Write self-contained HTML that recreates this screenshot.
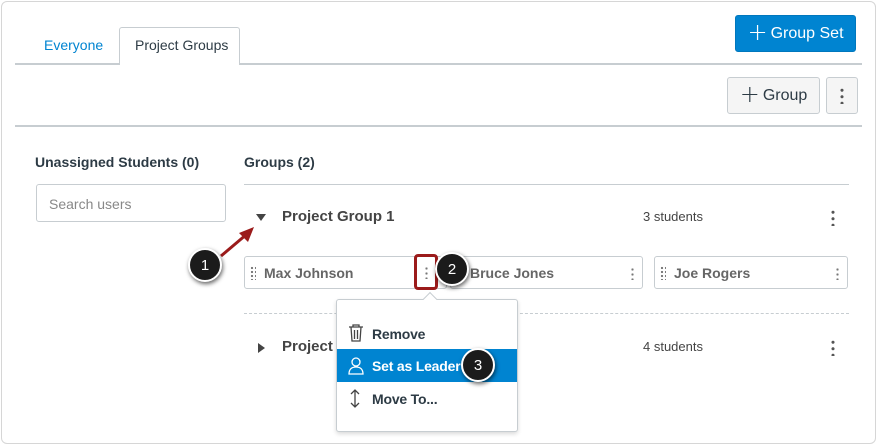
<!DOCTYPE html>
<html><head><meta charset="utf-8"><style>
*{box-sizing:border-box;margin:0;padding:0}
body{width:877px;height:445px;background:#fff;font-family:"Liberation Sans",sans-serif;position:relative;overflow:hidden;color:#2d3b45}
.a{position:absolute}
.frame{left:1px;top:1px;width:875px;height:443px;border:1px solid #d6d6d6;border-radius:6px}
.hl{height:2px;background:#c7cdd1}
.btn{border:1px solid #c7cdd1;background:#f5f5f5;border-radius:3px;color:#2d3b45;font-size:16px;display:flex;align-items:center;justify-content:center}
.card{top:256px;height:33px;border:1px solid #c7cdd1;border-radius:3px}
.nm{font-size:14px;font-weight:bold;color:#666;top:8px;left:19px}
.grip{left:5px;top:9px;width:6px;height:14px;background-image:radial-gradient(circle,#777 1px,transparent 1.3px);background-size:4px 4px}
.kb{width:3px;height:13px;background-image:radial-gradient(circle,#777 1px,transparent 1.3px);background-size:3px 5px}
.kbb{width:4px;height:17px;background-image:radial-gradient(circle,#555 1.4px,transparent 1.7px);background-size:4px 6.5px}
.call{width:34px;height:34px;border-radius:50%;background:#1b1b1b;border:2px solid #fff;box-shadow:1px 2px 4px rgba(0,0,0,.6);color:#fff;font-size:15px;display:flex;align-items:center;justify-content:center}
.mi{left:0;width:180px;height:33px;font-size:14px;font-weight:bold;display:flex;align-items:center;padding-left:35px;letter-spacing:-0.2px}
.pl{font-size:24px;font-weight:100;margin-right:3px;margin-top:-3px;font-family:"DejaVu Sans",sans-serif}
</style></head><body>
<div class="a frame"></div>
<div class="a" style="left:44px;top:37px;font-size:14px;color:#0084d1">Everyone</div>
<div class="a" style="left:119px;top:27px;width:121px;height:38px;border:1px solid #c7cdd1;border-bottom:none;background:#fff;border-radius:3px 3px 0 0;font-size:14px;padding:9px 0 0 15px;z-index:2">Project Groups</div>
<div class="a hl" style="left:15px;top:63px;width:847px"></div>
<div class="a btn" style="left:735px;top:15px;width:121px;height:37px;background:#0084d1;border-color:#0077bd;color:#fff"><span class="pl">+</span>Group Set</div>
<div class="a btn" style="left:727px;top:77px;width:93px;height:37px"><span class="pl">+</span>Group</div>
<div class="a btn" style="left:826px;top:77px;width:32px;height:37px"><div class="kbb"></div></div>
<div class="a hl" style="left:15px;top:125px;width:847px"></div>
<div class="a" style="left:35px;top:154px;font-size:14px;font-weight:bold">Unassigned Students (0)</div>
<div class="a" style="left:36px;top:184px;width:190px;height:38px;border:1px solid #c7cdd1;border-radius:3px;font-size:14px;color:#888;padding:11px 0 0 12px">Search users</div>
<div class="a" style="left:244px;top:154px;font-size:14px;font-weight:bold">Groups (2)</div>
<div class="a" style="left:244px;top:184px;width:605px;height:1px;background:#c7cdd1"></div>
<div class="a" style="left:256px;top:214px;width:0;height:0;border-left:5px solid transparent;border-right:5px solid transparent;border-top:7px solid #444"></div>
<div class="a" style="left:282px;top:208px;font-size:15px;font-weight:bold;color:#444">Project Group 1</div>
<div class="a" style="left:643px;top:209px;font-size:13px;color:#444">3 students</div>
<div class="a kbb" style="left:831px;top:209px"></div>
<div class="a card" style="left:244px;width:203px"><div class="a grip"></div><div class="a nm">Max Johnson</div></div>
<div class="a kb" style="left:425px;top:266px"></div>
<div class="a card" style="left:450px;width:193px"><div class="a nm">Bruce Jones</div><div class="a kb" style="left:180px;top:10px"></div></div>
<div class="a card" style="left:654px;width:194px"><div class="a grip"></div><div class="a nm">Joe Rogers</div><div class="a kb" style="left:181px;top:10px"></div></div>
<div class="a" style="left:414px;top:254px;width:24px;height:36px;border:3px solid #9b1b1b;border-radius:4px"></div>
<div class="a" style="left:244px;top:313px;width:605px;border-top:1px dashed #c7cdd1"></div>
<div class="a" style="left:258px;top:343px;width:0;height:0;border-top:5px solid transparent;border-bottom:5px solid transparent;border-left:7px solid #444"></div>
<div class="a" style="left:282px;top:338px;font-size:15px;font-weight:bold;color:#444">Project Group 2</div>
<div class="a" style="left:643px;top:339px;font-size:13px;color:#444">4 students</div>
<div class="a kbb" style="left:831px;top:339px"></div>
<div class="a" style="left:336px;top:299px;width:182px;height:133px;border:1px solid #c7cdd1;border-radius:3px;background:#fff;box-shadow:0 2px 4px rgba(0,0,0,.15)">
<div class="a" style="left:88px;top:-6px;width:10px;height:10px;background:#fff;border-left:1px solid #c7cdd1;border-top:1px solid #c7cdd1;transform:rotate(45deg)"></div>
<div class="a mi" style="top:17px">Remove</div>
<svg class="a" style="left:11px;top:24px" width="16" height="18" viewBox="0 0 16 18" fill="none" stroke="#444" stroke-width="1.3"><path d="M1 3h14M5 3V1h6v2M3 3l1 14h8l1-14M6.5 6v9M9.5 6v9"/></svg>
<div class="a mi" style="top:49px;background:#0084d1;color:#fff">Set as Leader</div>
<svg class="a" style="left:11px;top:57px" width="16" height="18" viewBox="0 0 16 18" fill="none" stroke="#fff" stroke-width="1.3"><circle cx="8" cy="5" r="4"/><path d="M1 17c0-5 3-7 7-7s7 2 7 7z"/></svg>
<div class="a mi" style="top:82px">Move To...</div>
<svg class="a" style="left:13px;top:89px" width="10" height="19" viewBox="0 0 10 19" fill="none" stroke="#444" stroke-width="1.3"><path d="M5 1v17M1 5l4-4 4 4M1 14l4 4 4-4"/></svg>
</div>
<svg class="a" style="left:215px;top:222px" width="45" height="40"><path d="M6 34L32 12" stroke="#9b1b1b" stroke-width="3"/><path d="M39 5L24 11 33 20z" fill="#9b1b1b"/></svg>
<div class="a call" style="left:188px;top:248px">1</div>
<div class="a call" style="left:435px;top:252px">2</div>
<div class="a call" style="left:461px;top:348px">3</div>
</body></html>
